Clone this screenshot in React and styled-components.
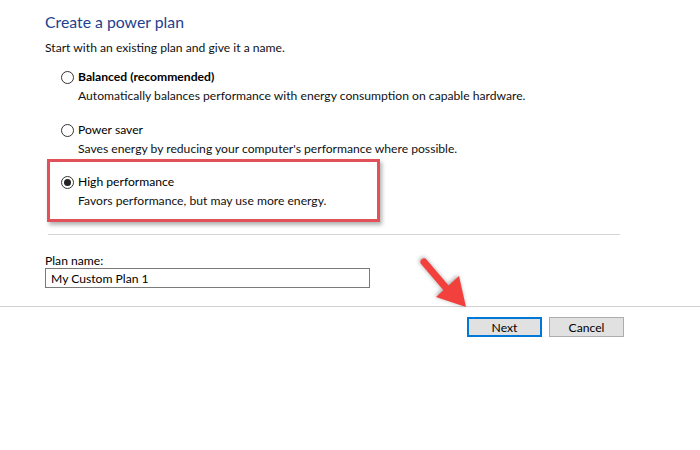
import styled, { createGlobalStyle } from "styled-components";

const GlobalStyle = createGlobalStyle`
  html, body {
    margin: 0;
    padding: 0;
    background: #fff;
  }
  body {
    width: 700px;
    height: 450px;
    overflow: hidden;
    font-family: Lato, "Noto Sans", sans-serif;
    font-size: 12.15px;
    color: #000;
  }
`;

const plans = [
  {
    id: "balanced",
    name: "Balanced (recommended)",
    bold: true,
    text: "Automatically balances performance with energy consumption on capable hardware.",
  },
  {
    id: "saver",
    name: "Power saver",
    text: "Saves energy by reducing your computer's performance where possible.",
  },
  {
    id: "high",
    name: "High performance",
    text: "Favors performance, but may use more energy.",
    checked: true,
    highlight: true,
  },
];

const App = () => {
  return (
    <Page>
      <GlobalStyle />
      <Content>
        <Title>Create a power plan</Title>
        <Intro>Start with an existing plan and give it a name.</Intro>
        <Options>
          {plans.map((plan) => (
            <Option key={plan.id} $highlight={plan.highlight}>
              <RadioRow>
                <Radio $checked={plan.checked} />
                <RadioLabel $bold={plan.bold}>{plan.name}</RadioLabel>
              </RadioRow>
              <Description>{plan.text}</Description>
            </Option>
          ))}
        </Options>
        <Separator />
        <FieldLabel>Plan name:</FieldLabel>
        <NameInput defaultValue="My Custom Plan 1" />
      </Content>
      <FooterLine />
      <Buttons>
        <Button $primary>Next</Button>
        <Button>Cancel</Button>
      </Buttons>
      <Arrow width="70" height="65" viewBox="0 0 70 65">
        <line x1="14" y1="12" x2="37" y2="39" stroke="#f2403c" strokeWidth="7" strokeLinecap="round" />
        <polygon points="26,47 49,26 56,57" fill="#f2403c" />
      </Arrow>
    </Page>
  );
};

const Page = styled.div`
  position: relative;
  width: 700px;
  height: 450px;
  background: #fff;
`;

const Content = styled.div`
  padding: 12px 0 0 45px;
  display: flex;
  flex-direction: column;
`;

const Title = styled.div`
  font-size: 15.8px;
  line-height: 20px;
  height: 20px;
  color: #21418e;
  margin-bottom: 7px;
`;

const Intro = styled.div`
  line-height: 18px;
  color: #111;
`;

const Options = styled.div`
  display: flex;
  flex-direction: column;
  padding-left: 16px;
  margin-top: 10px;
  gap: 15px;
`;

const Option = styled.div`
  display: flex;
  flex-direction: column;
  ${(p) =>
    p.$highlight &&
    `
    width: 333px;
    box-sizing: border-box;
    margin: -14px 0 0 -14px;
    padding: 10px 0 9px 11px;
    border: 3px solid #e0515a;
    box-shadow: 2px 3px 4px rgba(0, 0, 0, 0.3);
  `}
`;

const RadioRow = styled.div`
  display: flex;
  align-items: center;
  height: 20px;
  gap: 4px;
`;

const Radio = styled.span`
  position: relative;
  width: 13px;
  height: 13px;
  box-sizing: border-box;
  border: 1px solid #333;
  border-radius: 50%;
  flex-shrink: 0;
  &::after {
    content: "";
    display: ${(p) => (p.$checked ? "block" : "none")};
    position: absolute;
    left: 2px;
    top: 2px;
    width: 7px;
    height: 7px;
    border-radius: 50%;
    background: #222;
  }
`;

const RadioLabel = styled.span`
  font-weight: ${(p) => (p.$bold ? 700 : 400)};
  line-height: 20px;
`;

const Description = styled.div`
  padding-left: 17px;
  line-height: 18px;
  color: #111;
`;

const Separator = styled.div`
  margin: 12px 0 0 3px;
  width: 572px;
  height: 1px;
  background: #d4d4d4;
`;

const FieldLabel = styled.div`
  margin-top: 18px;
  line-height: 15px;
`;

const NameInput = styled.input`
  width: 325px;
  height: 20px;
  box-sizing: border-box;
  border: 1px solid #7a7a7a;
  padding: 0 5px;
  font-family: inherit;
  font-size: 12.15px;
  color: #000;
  outline: none;
`;

const FooterLine = styled.div`
  margin-top: 18px;
  height: 1px;
  background: #d0d0d0;
`;

const Buttons = styled.div`
  display: flex;
  justify-content: flex-end;
  gap: 7px;
  padding: 10px 76px 0 0;
`;

const Button = styled.button`
  width: 75px;
  height: 20px;
  box-sizing: border-box;
  padding: 0;
  background: #e1e1e1;
  border: ${(p) => (p.$primary ? "2px solid #0078d7" : "1px solid #adadad")};
  font-family: inherit;
  font-size: 12.15px;
  color: #000;
`;

const Arrow = styled.svg`
  position: absolute;
  left: 410px;
  top: 250px;
  overflow: visible;
  filter: drop-shadow(-1px -1px 2px rgba(0, 0, 0, 0.35));
`;

export default App;
